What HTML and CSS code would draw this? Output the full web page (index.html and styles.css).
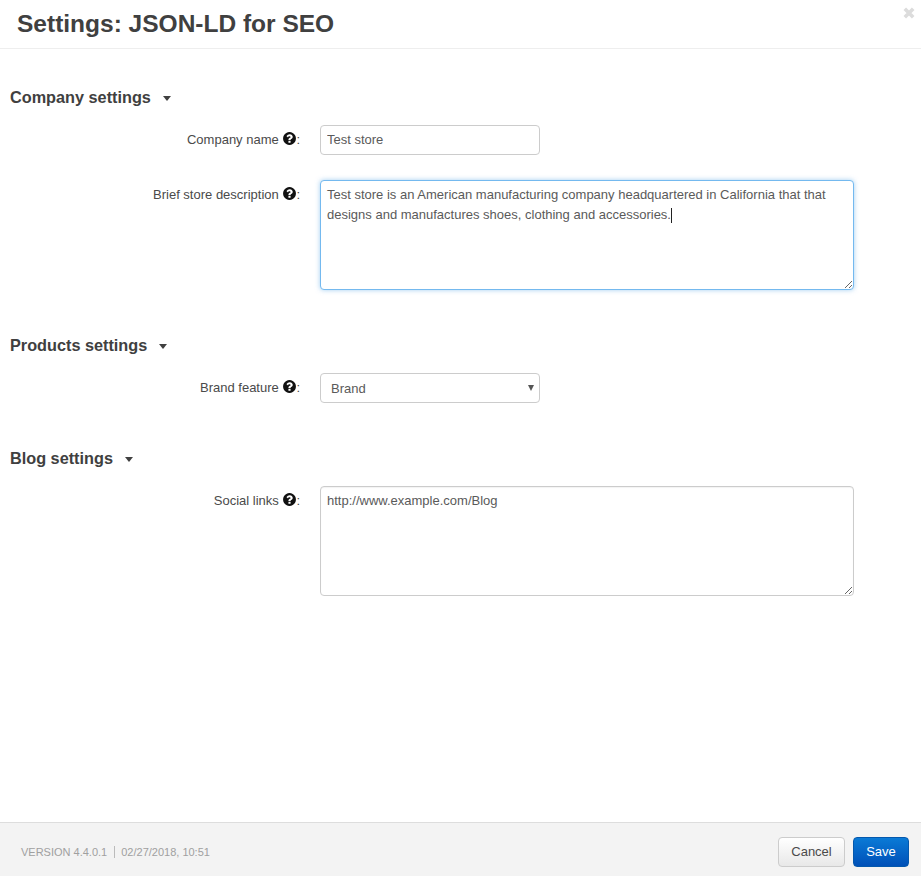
FILE: index.html
```html
<!DOCTYPE html>
<html lang="en">
  <head>
    <meta charset="UTF-8" />
    <title>Settings: JSON-LD for SEO</title>
    <link rel="stylesheet" href="styles.css">
  </head>
  <body>
    <div class="dialog">
      <header class="dialog-header">
        <h1>Settings: JSON-LD for SEO</h1>
        <svg class="close-icon" viewBox="0 0 10 10">
          <path d="M1.5 1.5l7 7M8.5 1.5l-7 7" />
        </svg>
      </header>

      <main class="dialog-body">
        <section class="group group-company">
          <h2>Company settings <span class="caret"></span></h2>
          <div class="row row-name">
            <label>Company name <svg class="help" viewBox="0 0 1792 1792"><path d="M1024 1376v-192q0-14-9-23t-23-9h-192q-14 0-23 9t-9 23v192q0 14 9 23t23 9h192q14 0 23-9t9-23zm256-672q0-88-55.5-163t-138.5-116-170-41q-243 0-371 213-15 24 8 42l132 100q7 6 19 6 16 0 25-12 53-68 86-92 34-24 86-24 48 0 85.5 26t37.5 59q0 38-20 61t-68 45q-63 28-115.5 86.5t-52.5 125.5v36q0 14 9 23t23 9h192q14 0 23-9t9-23q0-19 21.5-49.5t54.5-49.5q32-18 49-28.5t46-35 44.5-48 28-60.5 12.5-81zm384 192q0 209-103 385.5t-279.5 279.5-385.5 103-385.5-103-279.5-279.5-103-385.5 103-385.5 279.5-279.5 385.5-103 385.5 103 279.5 279.5 103 385.5z"/></svg>:</label>
            <input type="text" value="Test store" />
          </div>
          <div class="row">
            <label>Brief store description <svg class="help" viewBox="0 0 1792 1792"><path d="M1024 1376v-192q0-14-9-23t-23-9h-192q-14 0-23 9t-9 23v192q0 14 9 23t23 9h192q14 0 23-9t9-23zm256-672q0-88-55.5-163t-138.5-116-170-41q-243 0-371 213-15 24 8 42l132 100q7 6 19 6 16 0 25-12 53-68 86-92 34-24 86-24 48 0 85.5 26t37.5 59q0 38-20 61t-68 45q-63 28-115.5 86.5t-52.5 125.5v36q0 14 9 23t23 9h192q14 0 23-9t9-23q0-19 21.5-49.5t54.5-49.5q32-18 49-28.5t46-35 44.5-48 28-60.5 12.5-81zm384 192q0 209-103 385.5t-279.5 279.5-385.5 103-385.5-103-279.5-279.5-103-385.5 103-385.5 279.5-279.5 385.5-103 385.5 103 279.5 279.5 103 385.5z"/></svg>:</label>
            <div class="field">
              <textarea class="focused">Test store is an American manufacturing company headquartered in California that that designs and manufactures shoes, clothing and accessories.</textarea>
              <span class="text-cursor"></span>
            </div>
          </div>
        </section>

        <section class="group group-products">
          <h2>Products settings <span class="caret"></span></h2>
          <div class="row">
            <label>Brand feature <svg class="help" viewBox="0 0 1792 1792"><path d="M1024 1376v-192q0-14-9-23t-23-9h-192q-14 0-23 9t-9 23v192q0 14 9 23t23 9h192q14 0 23-9t9-23zm256-672q0-88-55.5-163t-138.5-116-170-41q-243 0-371 213-15 24 8 42l132 100q7 6 19 6 16 0 25-12 53-68 86-92 34-24 86-24 48 0 85.5 26t37.5 59q0 38-20 61t-68 45q-63 28-115.5 86.5t-52.5 125.5v36q0 14 9 23t23 9h192q14 0 23-9t9-23q0-19 21.5-49.5t54.5-49.5q32-18 49-28.5t46-35 44.5-48 28-60.5 12.5-81zm384 192q0 209-103 385.5t-279.5 279.5-385.5 103-385.5-103-279.5-279.5-103-385.5 103-385.5 279.5-279.5 385.5-103 385.5 103 279.5 279.5 103 385.5z"/></svg>:</label>
            <div class="select-wrap">
              <select>
                <option>Brand</option>
              </select>
            </div>
          </div>
        </section>

        <section class="group group-blog">
          <h2>Blog settings <span class="caret"></span></h2>
          <div class="row">
            <label>Social links <svg class="help" viewBox="0 0 1792 1792"><path d="M1024 1376v-192q0-14-9-23t-23-9h-192q-14 0-23 9t-9 23v192q0 14 9 23t23 9h192q14 0 23-9t9-23zm256-672q0-88-55.5-163t-138.5-116-170-41q-243 0-371 213-15 24 8 42l132 100q7 6 19 6 16 0 25-12 53-68 86-92 34-24 86-24 48 0 85.5 26t37.5 59q0 38-20 61t-68 45q-63 28-115.5 86.5t-52.5 125.5v36q0 14 9 23t23 9h192q14 0 23-9t9-23q0-19 21.5-49.5t54.5-49.5q32-18 49-28.5t46-35 44.5-48 28-60.5 12.5-81zm384 192q0 209-103 385.5t-279.5 279.5-385.5 103-385.5-103-279.5-279.5-103-385.5 103-385.5 279.5-279.5 385.5-103 385.5 103 279.5 279.5 103 385.5z"/></svg>:</label>
            <div class="field">
              <textarea>http://www.example.com/Blog</textarea>
            </div>
          </div>
        </section>
      </main>

      <footer class="dialog-footer">
        <div class="version">
          <span class="version-number">VERSION 4.4.0.1</span>
          <span>02/27/2018, 10:51</span>
        </div>
        <div class="actions">
          <button class="btn">Cancel</button>
          <button class="btn btn-primary">Save</button>
        </div>
      </footer>
    </div>
  </body>
</html>
```

FILE: styles.css
```css
html,
body {
  height: 100%;
}

body {
  margin: 0;
  font-family: "Liberation Sans", Arial, sans-serif;
  font-size: 13px;
  color: #4a4a4a;
  background: #fff;
  overflow: hidden;
}

.dialog {
  display: flex;
  flex-direction: column;
  height: 100%;
}

.dialog-header {
  position: relative;
  height: 48px;
  padding-left: 17px;
  border-bottom: 1px solid #eee;
}

h1 {
  margin: 0;
  font-size: 24.5px;
  line-height: 47px;
  font-weight: bold;
  color: #404040;
}

.close-icon {
  position: absolute;
  top: 7px;
  right: 6px;
  width: 12px;
  height: 12px;
  fill: none;
  stroke: #dcdcdc;
  stroke-width: 3;
}

.dialog-body {
  flex: 1;
  padding: 0 10px;
}

.group-company {
  padding-top: 37px;
}

.group-products {
  padding-top: 44px;
}

.group-blog {
  padding-top: 44px;
}

h2 {
  margin: 0 0 17px;
  font-size: 16.25px;
  line-height: 22px;
  font-weight: bold;
  color: #404040;
}

.caret {
  display: inline-block;
  width: 0;
  height: 0;
  margin-left: 7.5px;
  vertical-align: middle;
  border-top: 5px solid #404040;
  border-left: 4px solid transparent;
  border-right: 4px solid transparent;
}

.row {
  display: grid;
  grid-template-columns: 290px 1fr;
  column-gap: 20px;
  align-items: start;
}

.row-name {
  margin-bottom: 25px;
}

label {
  padding-top: 6px;
  text-align: right;
  line-height: 18px;
}

.help {
  width: 15px;
  height: 15px;
  margin-right: -1px;
  vertical-align: -2px;
  fill: #111;
}

input,
select,
textarea {
  box-sizing: border-box;
  font-family: inherit;
  font-size: 13px;
  color: #5a5a5a;
  background: #fff;
  border: 1px solid #ccc;
  border-radius: 4px;
  outline: none;
}

input,
select {
  display: block;
  width: 220px;
  height: 30px;
  padding: 0 6px 2px;
}

select {
  appearance: none;
  padding: 0 6px 0 10px;
}

.select-wrap {
  position: relative;
  width: 220px;
}

/* small arrow of the select */
.select-wrap::after {
  content: "";
  position: absolute;
  top: 12px;
  right: 6px;
  border-top: 6px solid #555;
  border-left: 3px solid transparent;
  border-right: 3px solid transparent;
}

.field {
  position: relative;
  width: 534px;
}

textarea {
  display: block;
  width: 534px;
  height: 110px;
  padding: 4px 6px;
  line-height: 20px;
  box-shadow: inset 0 1px 1px rgba(0, 0, 0, 0.05);
}

textarea.focused {
  border-color: #74b9ef;
  box-shadow: 0 0 5px rgba(102, 175, 233, 0.6);
}

.text-cursor {
  position: absolute;
  left: 351px;
  top: 28px;
  width: 1px;
  height: 15px;
  background: #222;
}

.dialog-footer {
  display: flex;
  align-items: center;
  justify-content: space-between;
  height: 49px;
  padding: 4px 12px 0 21px;
  background: #f3f3f3;
  border-top: 1px solid #ddd;
}

.version {
  display: flex;
  font-size: 11px;
  color: #a0a0a0;
}

.version-number {
  margin-right: 6px;
  padding-right: 7px;
  border-right: 1px solid #bbb;
}

.actions {
  display: flex;
  gap: 8px;
}

.btn {
  height: 30px;
  width: 67px;
  padding: 0;
  font-family: inherit;
  font-size: 13px;
  color: #4a4a4a;
  background: linear-gradient(#fff, #e8e8e8);
  border: 1px solid #ccc;
  border-radius: 4px;
}

.btn-primary {
  width: 56px;
  color: #fff;
  background: linear-gradient(#0a7ad6, #0050b8);
  border-color: #0458ad;
}
```
